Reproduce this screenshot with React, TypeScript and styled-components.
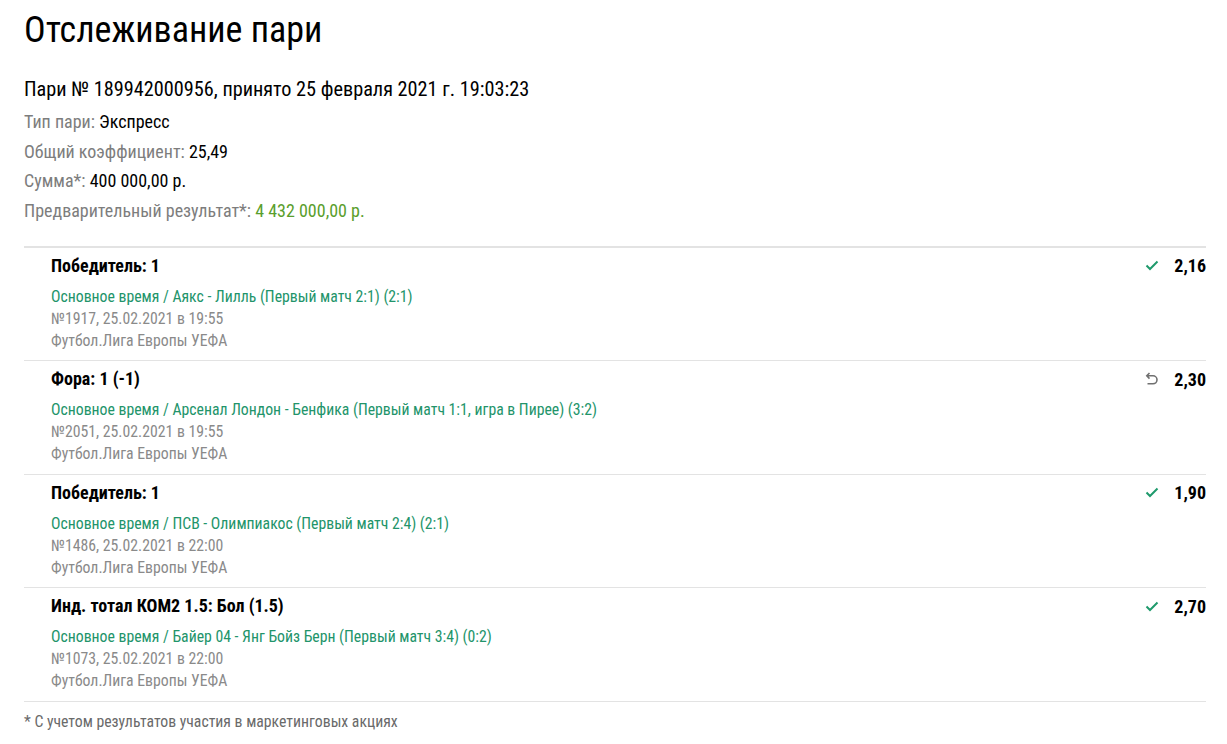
import styled, { createGlobalStyle } from "styled-components"

const GlobalStyle = createGlobalStyle`
  html, body {
    margin: 0;
    padding: 0;
    background: #fff;
  }
  body {
    font-family: "Roboto Condensed", Roboto, "Noto Sans", sans-serif;
    font-stretch: condensed;
    color: #000;
  }
`

const Page = styled.div`
  padding: 8px 21px 0 24px;
  display: flex;
  flex-direction: column;
`

const Title = styled.h1`
  margin: 0;
  font-size: 36px;
  font-weight: 400;
  line-height: 44px;
`

const Header = styled.div`
  margin-top: 25px;
  font-size: 20.25px;
  line-height: 24px;
`

const Meta = styled.div`
  margin-top: 6px;
  display: flex;
  flex-direction: column;
`

const MetaRow = styled.div`
  font-size: 18px;
  line-height: 29.7px;
  color: #7d7d7d;
`

const Value = styled.span<{ $accent?: boolean }>`
  color: ${(p) => (p.$accent ? "#5a9e2c" : "#000")};
`

const Events = styled.div`
  margin-top: 20px;
  border-top: 2px solid #e3e3e3;
`

const Event = styled.div`
  display: flex;
  justify-content: space-between;
  align-items: flex-start;
  padding: 7px 0 8.5px 27px;
  border-bottom: 1px solid #e3e3e3;
`

const EventBody = styled.div`
  display: flex;
  flex-direction: column;
`

const Outcome = styled.div`
  font-size: 18px;
  font-weight: 700;
  line-height: 22px;
  margin-bottom: 9px;
`

const Match = styled.div`
  font-size: 15.75px;
  line-height: 22px;
  color: #22946a;
`

const Info = styled.div`
  font-size: 15.75px;
  line-height: 22px;
  color: #8a8a8a;
`

const OddsBox = styled.div`
  display: flex;
  align-items: center;
  gap: 15px;
  height: 22px;
`

const Odds = styled.span`
  font-size: 18px;
  font-weight: 700;
`

const Note = styled.div`
  margin-top: 10px;
  font-size: 15.75px;
  color: #6a6a6a;
`

type Status = "win" | "return"

interface Bet {
  outcome: string
  match: string
  info: string
  odds: string
  status: Status
}

const bets: Bet[] = [
  {
    outcome: "Победитель: 1",
    match: "Основное время / Аякс - Лилль (Первый матч 2:1) (2:1)",
    info: "№1917, 25.02.2021 в 19:55",
    odds: "2,16",
    status: "win",
  },
  {
    outcome: "Фора: 1 (-1)",
    match: "Основное время / Арсенал Лондон - Бенфика (Первый матч 1:1, игра в Пирее) (3:2)",
    info: "№2051, 25.02.2021 в 19:55",
    odds: "2,30",
    status: "return",
  },
  {
    outcome: "Победитель: 1",
    match: "Основное время / ПСВ - Олимпиакос (Первый матч 2:4) (2:1)",
    info: "№1486, 25.02.2021 в 22:00",
    odds: "1,90",
    status: "win",
  },
  {
    outcome: "Инд. тотал КОМ2 1.5: Бол (1.5)",
    match: "Основное время / Байер 04 - Янг Бойз Берн (Первый матч 3:4) (0:2)",
    info: "№1073, 25.02.2021 в 22:00",
    odds: "2,70",
    status: "win",
  },
]

const CheckIcon = () => (
  <svg width="14" height="11" viewBox="0 0 14 11" fill="none">
    <path d="M1.5 5.5 L5 9 L12.5 1.5" stroke="#1f9a6c" strokeWidth="2" />
  </svg>
)

const ReturnIcon = () => (
  <svg width="14" height="14" viewBox="0 0 14 14" fill="none">
    <path
      d="M4.5 1 L1.8 3.8 L4.5 6.6 M1.8 3.8 H8 A4 4 0 0 1 8 11.8 H2.5"
      stroke="#707070"
      strokeWidth="1.6"
    />
  </svg>
)

const App = () => {
  return (
    <>
      <GlobalStyle />
      <Page>
        <Title>Отслеживание пари</Title>
        <Header>Пари № 189942000956, принято 25 февраля 2021 г. 19:03:23</Header>
        <Meta>
          <MetaRow>
            Тип пари: <Value>Экспресс</Value>
          </MetaRow>
          <MetaRow>
            Общий коэффициент: <Value>25,49</Value>
          </MetaRow>
          <MetaRow>
            Сумма*: <Value>400 000,00 р.</Value>
          </MetaRow>
          <MetaRow>
            Предварительный результат*: <Value $accent>4 432 000,00 р.</Value>
          </MetaRow>
        </Meta>
        <Events>
          {bets.map((bet, i) => (
            <Event key={i}>
              <EventBody>
                <Outcome>{bet.outcome}</Outcome>
                <Match>{bet.match}</Match>
                <Info>{bet.info}</Info>
                <Info>Футбол.Лига Европы УЕФА</Info>
              </EventBody>
              <OddsBox>
                {bet.status === "win" ? <CheckIcon /> : <ReturnIcon />}
                <Odds>{bet.odds}</Odds>
              </OddsBox>
            </Event>
          ))}
        </Events>
        <Note>* С учетом результатов участия в маркетинговых акциях</Note>
      </Page>
    </>
  )
}

export default App
